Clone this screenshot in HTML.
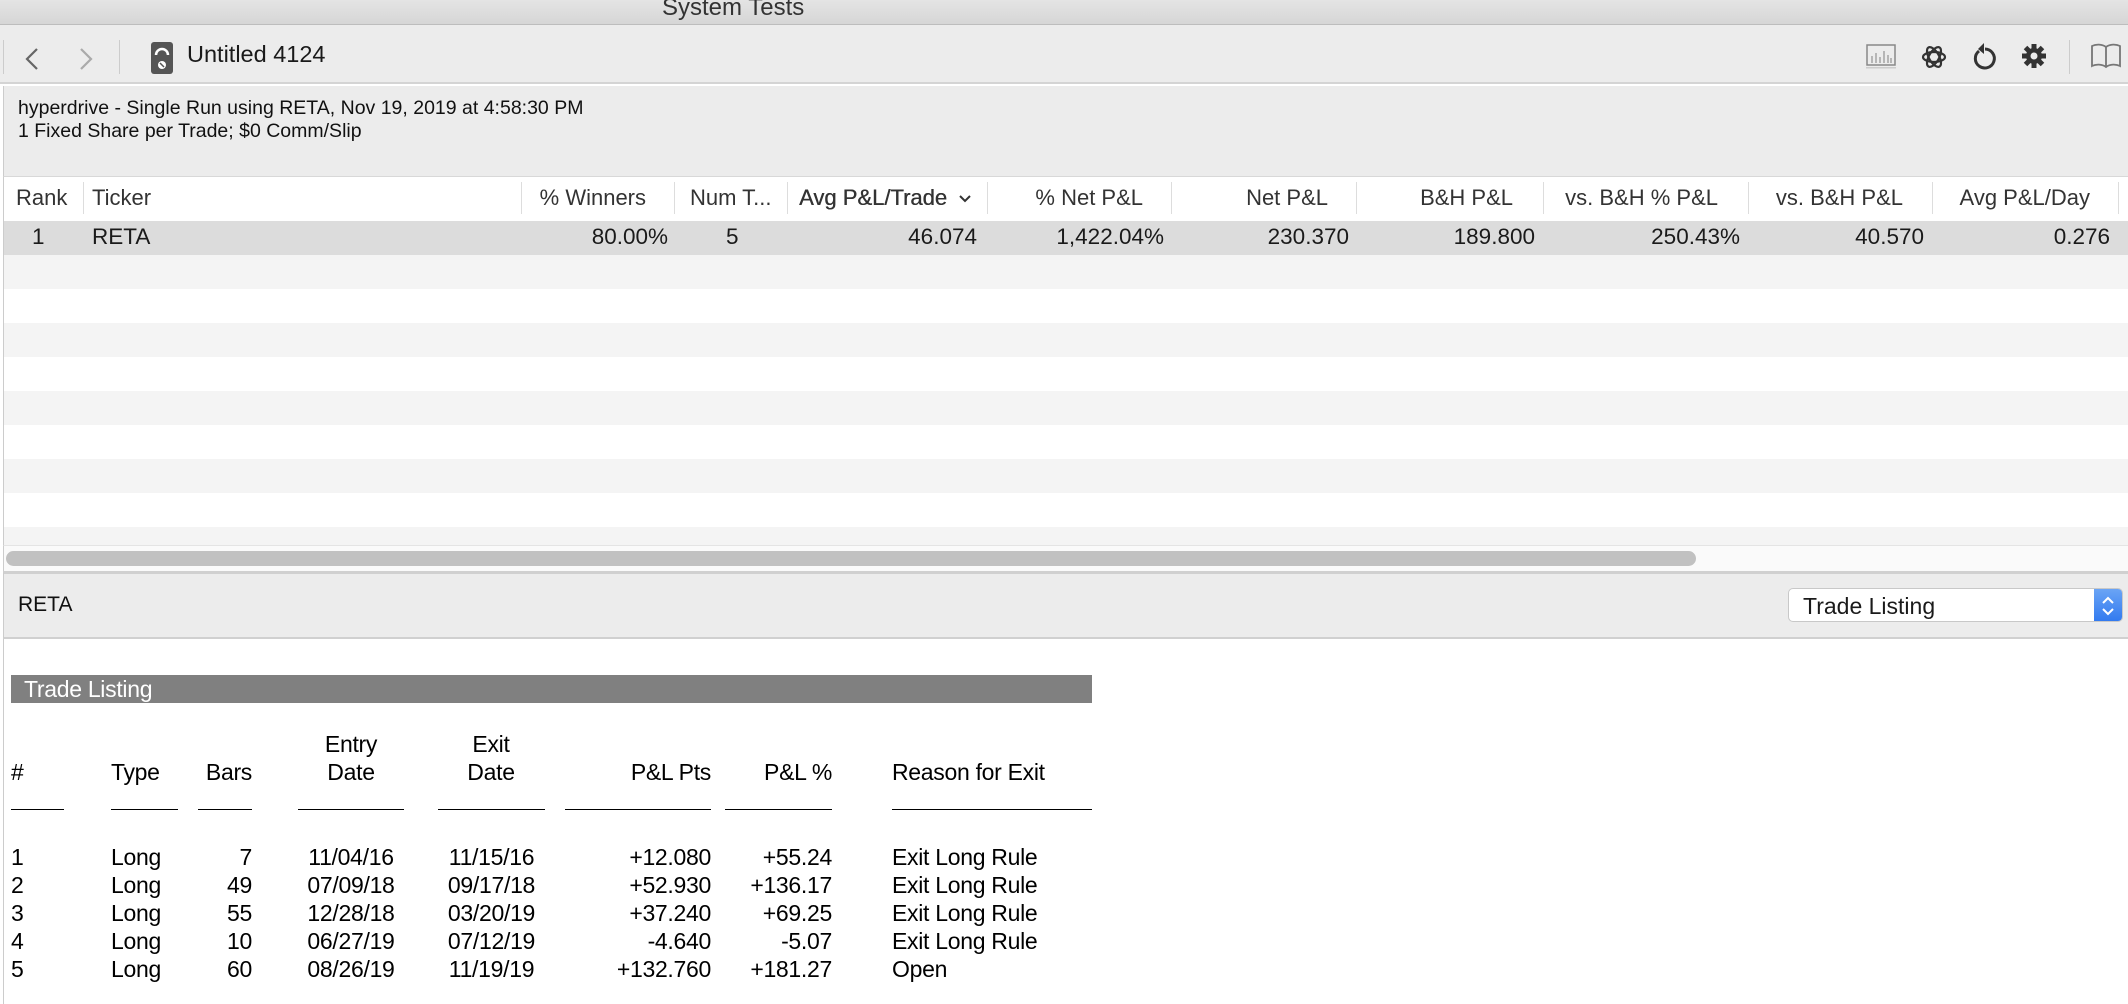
<!DOCTYPE html>
<html><head><meta charset="utf-8"><style>
*{margin:0;padding:0;box-sizing:border-box}
body{width:2128px;height:1004px;overflow:hidden;background:#fff;font-family:"Liberation Sans",Helvetica,Arial,sans-serif;position:relative;color:#1a1a1a}
.a{position:absolute}
.hd{position:absolute;top:185px;font-size:22px;color:#333;white-space:nowrap}
.sep{position:absolute;top:182px;width:1px;height:32px;background:#ddd}
.rv{position:absolute;top:224px;font-size:22.5px;white-space:nowrap}
.tl{position:absolute;font-size:23px;color:#000;white-space:nowrap;letter-spacing:-0.3px}
.ul{position:absolute;top:809px;height:1px;background:#000}
</style></head><body>
<div class="a" style="left:0;top:0;width:2128px;height:25px;background:linear-gradient(#e4e4e4,#d6d6d6);border-bottom:1px solid #bdbdbd"></div>
<div class="a" style="left:662px;top:-6px;font-size:24px;color:#333">System Tests</div>
<div class="a" style="left:0;top:25px;width:2128px;height:59px;background:#ececec;border-bottom:2px solid #d4d4d4"></div>
<div class="a" style="left:3px;top:40px;width:1px;height:34px;background:#ccc"></div>
<svg class="a" style="left:22px;top:46px" width="20" height="26"><path d="M15 3 L5 13 L15 23" fill="none" stroke="#666" stroke-width="2.2"/></svg>
<svg class="a" style="left:76px;top:46px" width="20" height="26"><path d="M5 3 L15 13 L5 23" fill="none" stroke="#aaa" stroke-width="2.2"/></svg>
<div class="a" style="left:119px;top:40px;width:1px;height:34px;background:#ccc"></div>
<svg class="a" style="left:151px;top:42px" width="22" height="32"><rect x="0" y="0" width="22" height="32" rx="3" fill="#555"/><path d="M5 13 A6 6 0 0 1 17 13" fill="none" stroke="#fff" stroke-width="2.5"/><circle cx="11" cy="23" r="4" fill="#fff"/><path d="M9 21 L13 25" stroke="#555" stroke-width="1.5"/></svg>
<div class="a" style="left:187px;top:41px;font-size:23.5px;color:#1a1a1a">Untitled 4124</div>
<svg class="a" style="left:1866px;top:44px" width="30" height="26"><rect x="1" y="1" width="28" height="20" fill="none" stroke="#888" stroke-width="1.5"/><path d="M6 19V12M10 19V9M14 19V13M18 19V7M22 19V11M25 19V14" stroke="#999" stroke-width="1.3"/><rect x="0" y="23" width="30" height="1.5" fill="#ccc"/></svg>
<svg class="a" style="left:1920px;top:43px" width="28" height="28" viewBox="0 0 28 28"><g fill="none" stroke="#333" stroke-width="2.2"><ellipse cx="14" cy="14" rx="11" ry="5"/><ellipse cx="14" cy="14" rx="11" ry="5" transform="rotate(60 14 14)"/><ellipse cx="14" cy="14" rx="11" ry="5" transform="rotate(120 14 14)"/></g></svg>
<svg class="a" style="left:1971px;top:42px" width="27" height="30" viewBox="0 0 27 30"><path d="M8 9 A9.5 9.5 0 1 0 14 7" fill="none" stroke="#333" stroke-width="3"/><path d="M13 1 L7 7 L13 12 Z" fill="#333"/></svg>
<svg class="a" style="left:2021px;top:43px" width="26" height="26" viewBox="0 0 26 26"><g fill="#333"><circle cx="13" cy="13" r="8"/><rect x="10.5" y="1" width="5" height="24"/><rect x="10.5" y="1" width="5" height="24" transform="rotate(45 13 13)"/><rect x="10.5" y="1" width="5" height="24" transform="rotate(90 13 13)"/><rect x="10.5" y="1" width="5" height="24" transform="rotate(135 13 13)"/></g><circle cx="13" cy="13" r="3.5" fill="#ececec"/></svg>
<div class="a" style="left:2069px;top:40px;width:1px;height:34px;background:#ccc"></div>
<svg class="a" style="left:2090px;top:42px" width="32" height="28" viewBox="0 0 32 28"><path d="M16 5 C12 2 6 2 2 4 V24 C6 22 12 22 16 25 C20 22 26 22 30 24 V4 C26 2 20 2 16 5 Z M16 5 V25" fill="none" stroke="#777" stroke-width="1.8"/></svg>
<div class="a" style="left:3px;top:86px;width:2125px;height:90px;background:#ececec;border-left:1px solid #ccc"></div>
<div class="a" style="left:18px;top:97px;font-size:19.5px;line-height:23px;color:#111">hyperdrive - Single Run using RETA, Nov 19, 2019 at 4:58:30 PM<br>1 Fixed Share per Trade; $0 Comm/Slip</div>
<div class="a" style="left:3px;top:176px;width:2125px;height:45px;background:#fff;border-top:1px solid #d8d8d8;border-left:1px solid #ccc"></div>
<div class="hd" style="left:16px">Rank</div><div class="sep" style="left:83px"></div>
<div class="hd" style="left:92px">Ticker</div><div class="sep" style="left:521px"></div>
<div class="hd" style="right:1482px">% Winners</div><div class="sep" style="left:674px"></div>
<div class="hd" style="left:690px">Num T...</div><div class="sep" style="left:787px"></div>
<div class="hd" style="left:799px;color:#333;text-shadow:0.4px 0 0 #333">Avg P&amp;L/Trade</div><svg class="a" style="left:958px;top:194px" width="14" height="10"><path d="M2 2 L7 7 L12 2" fill="none" stroke="#333" stroke-width="2"/></svg><div class="sep" style="left:987px"></div>
<div class="hd" style="right:985px">% Net P&amp;L</div><div class="sep" style="left:1171px"></div>
<div class="hd" style="right:800px">Net P&amp;L</div><div class="sep" style="left:1356px"></div>
<div class="hd" style="right:615px">B&amp;H P&amp;L</div><div class="sep" style="left:1543px"></div>
<div class="hd" style="right:410px">vs. B&amp;H % P&amp;L</div><div class="sep" style="left:1748px"></div>
<div class="hd" style="right:225px">vs. B&amp;H P&amp;L</div><div class="sep" style="left:1932px"></div>
<div class="hd" style="right:38px">Avg P&amp;L/Day</div><div class="sep" style="left:2118px"></div>
<div class="a" style="left:3px;top:221px;width:2125px;height:34px;background:#dcdcdc;border-left:1px solid #ccc"></div>
<div class="rv" style="left:32px">1</div>
<div class="rv" style="left:92px">RETA</div>
<div class="rv" style="right:1460px">80.00%</div>
<div class="rv" style="left:726px">5</div>
<div class="rv" style="right:1151px">46.074</div>
<div class="rv" style="right:964px">1,422.04%</div>
<div class="rv" style="right:779px">230.370</div>
<div class="rv" style="right:593px">189.800</div>
<div class="rv" style="right:388px">250.43%</div>
<div class="rv" style="right:204px">40.570</div>
<div class="rv" style="right:18px">0.276</div>
<div class="a" style="left:3px;top:255px;width:2125px;height:290px;border-left:1px solid #ccc;background:repeating-linear-gradient(#f4f4f4 0 34px,#fff 34px 68px)"></div>
<div class="a" style="left:3px;top:545px;width:2125px;height:26px;background:#fafafa;border-top:1px solid #e4e4e4;border-left:1px solid #ccc"></div>
<div class="a" style="left:6px;top:551px;width:1690px;height:15px;border-radius:8px;background:#c1c1c1"></div>
<div class="a" style="left:3px;top:571px;width:2125px;height:68px;background:#ececec;border-top:3px solid #d0d0d0;border-bottom:2px solid #d0d0d0;border-left:1px solid #ccc"></div>
<div class="a" style="left:18px;top:593px;font-size:21px;color:#111">RETA</div>
<div class="a" style="left:1788px;top:588px;width:335px;height:34px;background:#fff;border:1px solid #c8c8c8;border-radius:5px;overflow:hidden"><div class="a" style="left:14px;top:4px;font-size:23px;color:#1a1a1a">Trade Listing</div><div class="a" style="right:0;top:0;width:28px;height:34px;background:linear-gradient(#6aa4f5,#2f78ef)"></div><svg class="a" style="right:6px;top:6px" width="16" height="22"><path d="M3 8 L8 3 L13 8 M3 14 L8 19 L13 14" fill="none" stroke="#fff" stroke-width="2"/></svg></div>
<div class="a" style="left:3px;top:639px;width:1px;height:365px;background:#ccc"></div>
<div class="a" style="left:11px;top:675px;width:1081px;height:28px;background:#808080"></div>
<div class="a" style="left:24px;top:676px;font-size:23px;color:#fff;letter-spacing:-0.3px">Trade Listing</div>
<div class="tl" style="left:351px;top:731px;transform:translateX(-50%)">Entry</div>
<div class="tl" style="left:491px;top:731px;transform:translateX(-50%)">Exit</div>
<div class="tl" style="left:11px;top:759px">#</div>
<div class="tl" style="left:111px;top:759px">Type</div>
<div class="tl" style="right:1876px;top:759px">Bars</div>
<div class="tl" style="left:351px;top:759px;transform:translateX(-50%)">Date</div>
<div class="tl" style="left:491px;top:759px;transform:translateX(-50%)">Date</div>
<div class="tl" style="right:1417px;top:759px">P&amp;L Pts</div>
<div class="tl" style="right:1296px;top:759px">P&amp;L %</div>
<div class="tl" style="left:892px;top:759px">Reason for Exit</div>
<div class="ul" style="left:11px;width:53px"></div>
<div class="ul" style="left:111px;width:67px"></div>
<div class="ul" style="left:198px;width:54px"></div>
<div class="ul" style="left:298px;width:106px"></div>
<div class="ul" style="left:438px;width:107px"></div>
<div class="ul" style="left:565px;width:146px"></div>
<div class="ul" style="left:725px;width:107px"></div>
<div class="ul" style="left:892px;width:200px"></div>
<div class="tl" style="left:11px;top:843px;line-height:28px">1<br>2<br>3<br>4<br>5</div>
<div class="tl" style="left:111px;top:843px;line-height:28px">Long<br>Long<br>Long<br>Long<br>Long</div>
<div class="tl" style="right:1876px;top:843px;line-height:28px;text-align:right">7<br>49<br>55<br>10<br>60</div>
<div class="tl" style="left:298px;width:106px;top:843px;line-height:28px;text-align:center">11/04/16<br>07/09/18<br>12/28/18<br>06/27/19<br>08/26/19</div>
<div class="tl" style="left:438px;width:107px;top:843px;line-height:28px;text-align:center">11/15/16<br>09/17/18<br>03/20/19<br>07/12/19<br>11/19/19</div>
<div class="tl" style="right:1417px;top:843px;line-height:28px;text-align:right">+12.080<br>+52.930<br>+37.240<br>-4.640<br>+132.760</div>
<div class="tl" style="right:1296px;top:843px;line-height:28px;text-align:right">+55.24<br>+136.17<br>+69.25<br>-5.07<br>+181.27</div>
<div class="tl" style="left:892px;top:843px;line-height:28px">Exit Long Rule<br>Exit Long Rule<br>Exit Long Rule<br>Exit Long Rule<br>Open</div>
</body></html>
